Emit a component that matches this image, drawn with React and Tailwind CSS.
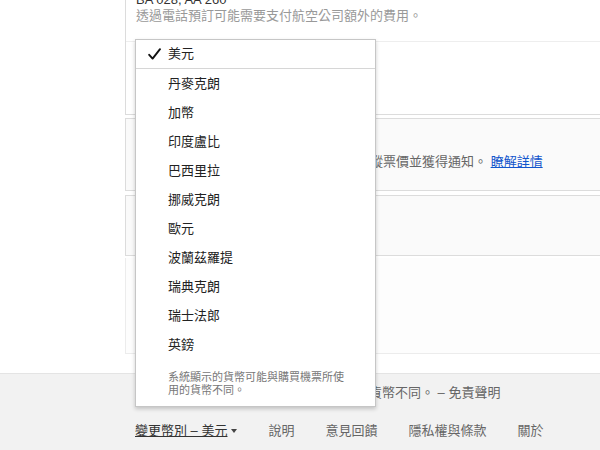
import React from 'react';

const currencies = ['丹麥克朗', '加幣', '印度盧比', '巴西里拉', '挪威克朗', '歐元', '波蘭茲羅提', '瑞典克朗', '瑞士法郎', '英鎊'];

const footerLinks = ['說明', '意見回饋', '隱私權與條款', '關於'];

function CurrencyMenu() {
  return (
    <div className="absolute left-[135px] top-[39px] w-[241px] bg-white border border-[#c6c6c6] shadow-[0_2px_4px_rgba(0,0,0,0.2)] z-10">
      <div className="h-[29px] flex items-center border-b border-[#d6d6d6] text-[13px] text-[#222]">
        <span className="w-[32px] flex justify-start pl-[12px]">
          <svg width="13" height="12" viewBox="0 0 13 12" fill="none">
            <path d="M1.2 6.8 L4.6 10.6 L12 1.2" stroke="#111" strokeWidth="1.9" strokeLinecap="round" strokeLinejoin="round" />
          </svg>
        </span>
        <span>美元</span>
      </div>
      {currencies.map((c) => (
        <div key={c} className="h-[29px] flex items-center pl-[32px] text-[13px] text-[#222]">
          {c}
        </div>
      ))}
      <div className="pl-[32px] pr-[16px] pt-[12px] pb-[9px] text-[11px] leading-[13px] text-[#777]">
        系統顯示的貨幣可能與購買機票所使<br />用的貨幣不同。
      </div>
    </div>
  );
}

export default function App() {
  return (
    <div className="relative w-[600px] h-[450px] overflow-hidden bg-white flex flex-col font-['Liberation_Sans','Noto_Sans_CJK_TC',sans-serif]">
      {/* results column */}
      <div className="h-[373px] shrink-0 pl-[125px]">
        <div className="w-[600px] -mt-[20px]">
          <div className="border-l border-b border-[#dcdcdc]">
            <div className="pl-[10px] pt-[12px] pb-[17px] text-[13px] leading-[16px]">
              <div className="text-[#333]">BA 028, AA 260</div>
              <div className="text-[#999]">透過電話預訂可能需要支付航空公司額外的費用。</div>
            </div>
            <div className="h-[73px] border-t border-[#eeeeee]"></div>
          </div>

          <div className="mt-[3px] h-[73px] bg-[#fafafa] border-l border-y border-[#dcdcdc] pl-[10px] pt-[35px] text-[13px] leading-[16px] text-[#666]">
            您可以開啟這個行程的價格追蹤功能以追蹤票價並獲得通知。 <span className="text-[#1155cc] underline">瞭解詳情</span>
          </div>

          <div className="mt-[4px] h-[61px] bg-[#fafafa] border-l border-y border-[#dcdcdc]"></div>

          <div className="mt-[2px] h-[96px] bg-[#fdfdfd] border-l border-b border-[#ececec]"></div>
        </div>
      </div>

      {/* footer */}
      <div className="flex-1 bg-[#f2f2f2] border-t border-[#e4e4e4] pl-[135px] text-[13px] leading-[16px]">
        <div className="pt-[11px] text-[#666] whitespace-nowrap">
          顯示的票價可能與您購買機票時所使用的貨幣不同。 – 免責聲明
        </div>
        <div className="mt-[22px] flex items-center gap-[31px] text-[#666] whitespace-nowrap">
          <div className="flex items-center text-[#333]">
            <span className="underline">變更幣別 – 美元</span>
            <span className="ml-[4px] w-0 h-0 border-l-[3px] border-r-[3px] border-t-[4px] border-l-transparent border-r-transparent border-t-[#444]"></span>
          </div>
          {footerLinks.map((l) => (
            <span key={l}>{l}</span>
          ))}
        </div>
      </div>

      <CurrencyMenu />
    </div>
  );
}
